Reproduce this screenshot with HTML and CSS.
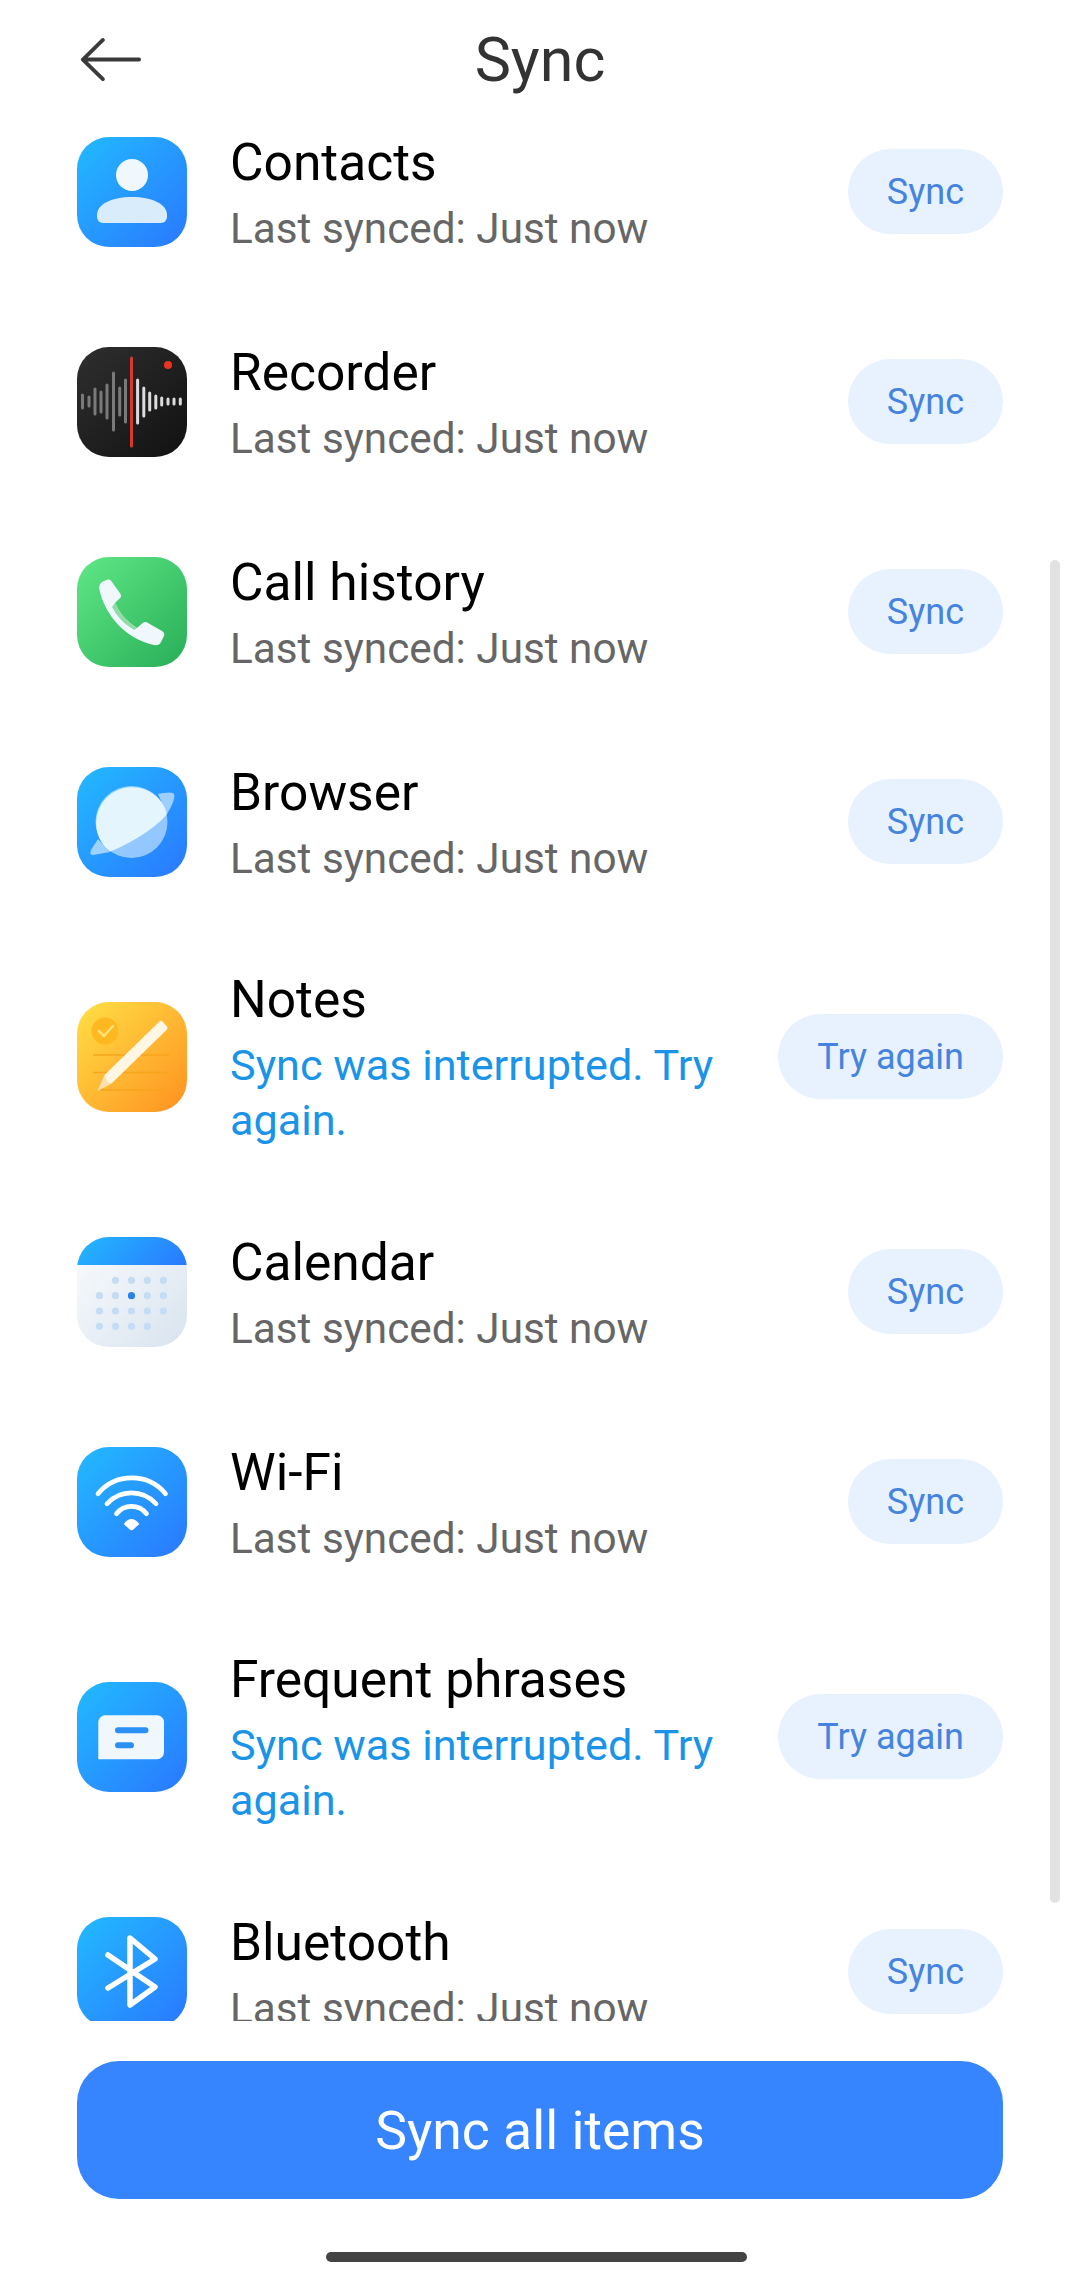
FILE: index.html
```html
<!DOCTYPE html>
<html lang="en">
<head>
<meta charset="utf-8">
<title>Sync</title>
<link rel="stylesheet" href="styles.css">
</head>
<body>
<div class="screen">
  <header class="header">
    <svg class="back" viewBox="0 0 64 46"><path d="M62 22.5H3M24 2 3 22.500 24 43"/></svg>
    <h1 class="title">Sync</h1>
    <span class="back-spacer"></span>
  </header>
  <main class="list">
    <div class="row">
      <div class="icon icon-blue"><svg viewBox="0 0 110 110"><circle class="fill-soft" cx="55" cy="38" r="16"/><path class="fill-soft2" d="M26 86a6 6 0 0 1-6-6v-2c0-11 15-18 35-18s35 7 35 18v2a6 6 0 0 1-6 6z"/></svg></div>
      <div class="text"><div class="name">Contacts</div><div class="sub">Last synced: Just now</div></div>
      <div class="btn">Sync</div>
    </div>
    <div class="row">
      <div class="icon icon-dark"><svg viewBox="0 0 110 110">
        <path class="bars-l" d="M5.500 48v13M12 50v9M18 42v25M24 45v20M30 38v33M36.500 26v57M42.700 41v27M48.500 33v42"/>
        <path class="bars-r" d="M60.600 33v43M66.800 41v28M72.700 46v17M78.800 49v12M84.700 51v7M91 52v5M97 52v5M103.300 52v5"/>
        <path class="bar-red" d="M54.500 11v88"/><circle class="dot-red" cx="91" cy="18" r="4"/></svg></div>
      <div class="text"><div class="name">Recorder</div><div class="sub">Last synced: Just now</div></div>
      <div class="btn">Sync</div>
    </div>
    <div class="row">
      <div class="icon icon-green"><svg viewBox="0 0 110 110"><path class="fill-soft" d="M22 31q0-5 5-7l4-1.500q3-.5 4 2.500l8.500 12q1.500 3-1.500 5l-4 4q6 15 22 25l5-4.500q3-2.500 6-.5l14 8q3 2 2 5l-3 6q-2 4-7 3C50 82 28 60 22 31z"/><path class="phone-shade" d="M38 46q6 15 22 25l-3 2Q42 64 35 50z"/></svg></div>
      <div class="text"><div class="name">Call history</div><div class="sub">Last synced: Just now</div></div>
      <div class="btn">Sync</div>
    </div>
    <div class="row">
      <div class="icon icon-blue"><svg viewBox="0 0 110 110">
        <circle class="planet-back" cx="54.500" cy="55" r="36"/>
        <path class="planet-ring" d="M33 85 16 88q-4 0-2-5l7-11zM97 27q2 5-7 20l-9-20q14-3 16 0z"/>
        <path class="planet-front" d="M33 84.500C50 78 78 62 90 47A36 36 0 1 0 33 84.500z"/></svg></div>
      <div class="text"><div class="name">Browser</div><div class="sub">Last synced: Just now</div></div>
      <div class="btn">Sync</div>
    </div>
    <div class="row">
      <div class="icon icon-orange"><svg viewBox="0 0 110 110">
        <circle class="note-badge" cx="28" cy="29" r="13.500"/><path class="note-check" d="m22 29 5 5 9-10"/>
        <path class="note-lines" d="M16 53h76M16 70.500h76M23 88h64"/>
        <path class="pencil-tip" d="M27.500 73 20.500 89 34.500 81.500z"/>
        <path class="pencil" d="M82.500 19.500q1.500-1.500 3 0l4.500 5q1 1.500 0 3L34.500 81.500q-5-1-7-8.500z"/></svg></div>
      <div class="text"><div class="name">Notes</div><div class="sub sub-alert">Sync was interrupted. Try again.</div></div>
      <div class="btn">Try again</div>
    </div>
    <div class="row">
      <div class="icon icon-cal"><svg viewBox="0 0 110 110">
        <g class="cal-dots"><circle cx="38.500" cy="43.300" r="3.600"/><circle cx="54.500" cy="43.300" r="3.600"/><circle cx="70.300" cy="43.300" r="3.600"/><circle cx="86.400" cy="43.300" r="3.600"/><circle cx="22.400" cy="58.700" r="3.600"/><circle cx="38.500" cy="58.700" r="3.600"/><circle cx="70.300" cy="58.700" r="3.600"/><circle cx="86.400" cy="58.700" r="3.600"/><circle cx="22.400" cy="74" r="3.600"/><circle cx="38.500" cy="74" r="3.600"/><circle cx="54.500" cy="74" r="3.600"/><circle cx="70.300" cy="74" r="3.600"/><circle cx="86.400" cy="74" r="3.600"/><circle cx="22.400" cy="89.300" r="3.600"/><circle cx="38.500" cy="89.300" r="3.600"/><circle cx="54.500" cy="89.300" r="3.600"/><circle cx="70.300" cy="89.300" r="3.600"/></g>
        <circle class="cal-today" cx="54.500" cy="58.700" r="3.600"/></svg></div>
      <div class="text"><div class="name">Calendar</div><div class="sub">Last synced: Just now</div></div>
      <div class="btn">Sync</div>
    </div>
    <div class="row">
      <div class="icon icon-blue"><svg viewBox="0 0 110 110"><path class="wifi" d="M21 46.700A44 44 0 0 1 88.500 46.700M30 56.700A33 33 0 0 1 79 56.700M39.500 66.700A19 19 0 0 1 69.500 66.700"/><path class="fill-white" d="M54.500 72q4 0 7.800 5l-6.300 5.800q-1.500 1-3 0L46.700 77q3.800-5 7.800-5z"/></svg></div>
      <div class="text"><div class="name">Wi-Fi</div><div class="sub">Last synced: Just now</div></div>
      <div class="btn">Sync</div>
    </div>
    <div class="row">
      <div class="icon icon-blue"><svg viewBox="0 0 110 110"><path class="fill-soft" d="M28 33.300h52a7 7 0 0 1 7 7v30a7 7 0 0 1-7 7H21.300V40.300a7 7 0 0 1 6.700-7z"/><path class="bubble-lines" d="M41 48.300h27.500M41 63.300h13"/></svg></div>
      <div class="text"><div class="name">Frequent phrases</div><div class="sub sub-alert">Sync was interrupted. Try again.</div></div>
      <div class="btn">Try again</div>
    </div>
    <div class="row">
      <div class="icon icon-blue"><svg viewBox="0 0 110 110"><path class="bt" d="M31 38 78 70 53 88V21L78 42 31 71"/></svg></div>
      <div class="text"><div class="name">Bluetooth</div><div class="sub">Last synced: Just now</div></div>
      <div class="btn">Sync</div>
    </div>
    <div class="scrollbar"></div>
  </main>
  <footer class="footer">
    <div class="main-btn">Sync all items</div>
    <div class="home-bar"></div>
  </footer>
</div>
</body>
</html>
```
FILE: styles.css
```css
* { box-sizing: border-box; }
html, body { margin: 0; padding: 0; background: #fff; }
body { font-family: Roboto, "Noto Sans", sans-serif; }
.screen { width: 1080px; height: 2279px; display: flex; flex-direction: column; background: #fff; overflow: hidden; }

.header { height: 87px; flex: none; padding: 33px 80px 0; display: grid; grid-template-columns: 60px 1fr 60px; align-items: center; position: relative; }
.back { width: 61px; height: 44px; fill: none; stroke: #3a3a3a; stroke-width: 4; stroke-linecap: round; stroke-linejoin: round; }
.title { margin: 0; font-size: 61px; font-weight: 400; line-height: 54px; color: #333; text-align: center; }

.list { flex: 1; position: relative; overflow: hidden; }
.row { min-height: 210px; padding: 39px 77px; display: flex; align-items: center; }
.icon { width: 110px; height: 110px; flex: none; border-radius: 32px; overflow: hidden; }
.icon svg { display: block; width: 110px; height: 110px; }
.icon-blue { background: linear-gradient(135deg, #22baff, #2a78ff); }
.icon-dark { background: linear-gradient(135deg, #2f2f2f, #111); }
.icon-green { background: linear-gradient(135deg, #5fe886, #28ae58); }
.icon-orange { background: linear-gradient(135deg, #ffe045, #ff9120); }
.icon-cal { background: linear-gradient(135deg, #22baff, #2a78ff) top / 100% 28px no-repeat, linear-gradient(135deg, #fafcfe, #d8e3ee); }

.text { flex: 1; min-width: 0; margin-left: 43px; padding-right: 40px; }
.name { font-size: 51.500px; line-height: 68px; margin-bottom: 4px; color: #000; }
.sub { font-size: 42.300px; line-height: 55px; color: #666; }
.sub-alert { font-size: 43.200px; color: #1a94e8; }
.btn { flex: none; height: 85px; margin-bottom: 1px; padding: 0 39px; border-radius: 43px; background: #e8f1fe; color: #4584de; font-size: 36px; line-height: 87px; white-space: nowrap; }

.scrollbar { position: absolute; left: 1050px; top: 473px; width: 10px; height: 1343px; border-radius: 5px; background: #e2e2e2; }

.footer { height: 258px; flex: none; padding: 40px 77px 0; display: flex; flex-direction: column; align-items: center; }
.main-btn { width: 100%; height: 138px; border-radius: 42px; background: #3784ff; color: #fff; font-size: 53.500px; line-height: 140px; text-align: center; }
.home-bar { width: 421px; height: 10px; margin: 53px 7px 0 0; border-radius: 5px; background: #444; }

.fill-soft { fill: #f0f8fe; }
.fill-soft2 { fill: #d8ecfc; }
.fill-white { fill: #fff; }
.bars-l, .bars-r { fill: none; stroke-width: 3; stroke-linecap: round; }
.bars-l { stroke: #7a7a7a; }
.bars-r { stroke: #dcdcdc; }
.bar-red { fill: none; stroke: #d8392c; stroke-width: 3; stroke-linecap: round; }
.dot-red { fill: #ea3323; }
.phone-shade { fill: #8fdca6; }
.planet-back { fill: #fff; opacity: .5; }
.planet-ring { fill: #fff; opacity: .55; }
.planet-front { fill: #e4f5fd; }
.note-badge { fill: #ffb81f; }
.note-check { fill: none; stroke: #ffe27a; stroke-width: 2.500; stroke-linecap: round; stroke-linejoin: round; }
.note-lines { fill: none; stroke: #f8a51c; stroke-width: 1.500; }
.pencil { fill: #fff6e4; }
.pencil-tip { fill: #ffe0b0; }
.cal-dots { fill: #c4dcf5; }
.cal-today { fill: #2a83e6; }
.wifi { fill: none; stroke: #fff; stroke-width: 4.700; stroke-linecap: round; }
.bubble-lines { fill: none; stroke: #2b90f5; stroke-width: 6; stroke-linecap: round; }
.bt { fill: none; stroke: #fff; stroke-width: 5.500; stroke-linecap: round; stroke-linejoin: round; }
```
